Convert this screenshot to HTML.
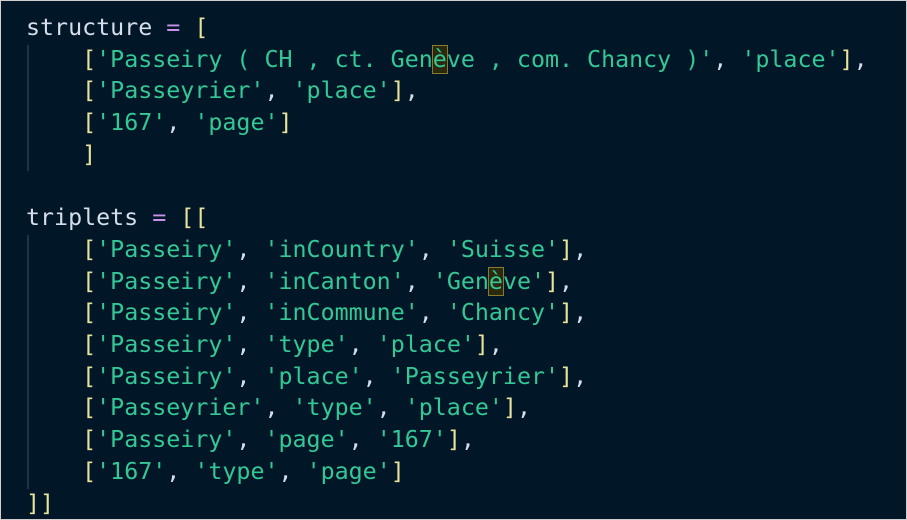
<!DOCTYPE html>
<html><head><meta charset="utf-8"><style>
html,body{margin:0;padding:0}
body{width:907px;height:520px;background:#011627;overflow:hidden;position:relative;box-sizing:border-box;border:1px solid #cfcfcf}
pre{position:absolute;left:25px;top:11px;margin:0;font-family:"DejaVu Sans Mono","Liberation Mono",monospace;font-size:23.3px;line-height:31.7px;color:#d6deeb;white-space:pre}
.p{color:#c792ea}.b{color:#e8e39a}.s{color:#34c896}
.h{outline:1px solid #8a7a2a;background:#2a2a10}
.g{position:absolute;left:26px;width:2px;background:#22324d}
</style></head><body>
<div class="g" style="top:44px;height:126px"></div>
<div class="g" style="top:234px;height:254px"></div>
<pre>structure <span class="p">=</span> <span class="b">[</span>
    <span class="b">[</span><span class="s">'Passeiry ( CH , ct. Gen<span class="h">è</span>ve , com. Chancy )'</span>, <span class="s">'place'</span><span class="b">]</span>,
    <span class="b">[</span><span class="s">'Passeyrier'</span>, <span class="s">'place'</span><span class="b">]</span>,
    <span class="b">[</span><span class="s">'167'</span>, <span class="s">'page'</span><span class="b">]</span>
    <span class="b">]</span>

triplets <span class="p">=</span> <span class="b">[[</span>
    <span class="b">[</span><span class="s">'Passeiry'</span>, <span class="s">'inCountry'</span>, <span class="s">'Suisse'</span><span class="b">]</span>,
    <span class="b">[</span><span class="s">'Passeiry'</span>, <span class="s">'inCanton'</span>, <span class="s">'Gen<span class="h">è</span>ve'</span><span class="b">]</span>,
    <span class="b">[</span><span class="s">'Passeiry'</span>, <span class="s">'inCommune'</span>, <span class="s">'Chancy'</span><span class="b">]</span>,
    <span class="b">[</span><span class="s">'Passeiry'</span>, <span class="s">'type'</span>, <span class="s">'place'</span><span class="b">]</span>,
    <span class="b">[</span><span class="s">'Passeiry'</span>, <span class="s">'place'</span>, <span class="s">'Passeyrier'</span><span class="b">]</span>,
    <span class="b">[</span><span class="s">'Passeyrier'</span>, <span class="s">'type'</span>, <span class="s">'place'</span><span class="b">]</span>,
    <span class="b">[</span><span class="s">'Passeiry'</span>, <span class="s">'page'</span>, <span class="s">'167'</span><span class="b">]</span>,
    <span class="b">[</span><span class="s">'167'</span>, <span class="s">'type'</span>, <span class="s">'page'</span><span class="b">]</span>
<span class="b">]]</span></pre>
</body></html>
